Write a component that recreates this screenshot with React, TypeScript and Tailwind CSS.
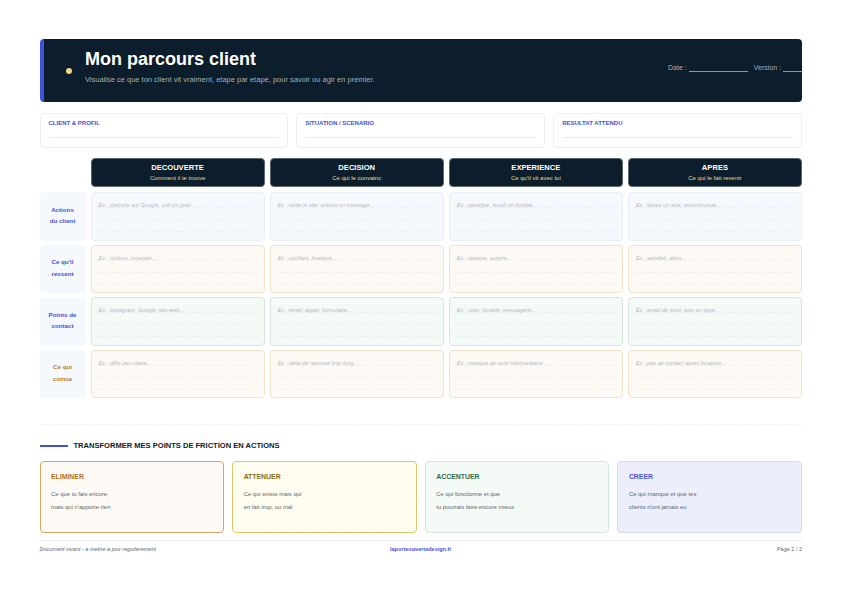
const infoCards = ["CLIENT & PROFIL", "SITUATION / SCENARIO", "RESULTAT ATTENDU"];

const stages = [
  { title: "DECOUVERTE", sub: "Comment il te trouve" },
  { title: "DECISION", sub: "Ce qui le convainc" },
  { title: "EXPERIENCE", sub: "Ce qu'il vit avec toi" },
  { title: "APRES", sub: "Ce qui le fait revenir" },
];

const rows = [
  {
    label: ["Actions", "du client"],
    labelClass: "text-[#3f52dc]",
    cellClass: "border-[#e8eef6] bg-[#f5f9fd]",
    lineClass: "border-[#ebeff4]",
    cells: [
      "Ex : cherche sur Google, voit un post...",
      "Ex : visite le site, envoie un message...",
      "Ex : participe, recoit un livrable...",
      "Ex : laisse un avis, recommande...",
    ],
  },
  {
    label: ["Ce qu'il", "ressent"],
    labelClass: "text-[#3f52dc]",
    cellClass: "border-[#f3e1c8] bg-[#fdf9f4]",
    lineClass: "border-[#f0eeea]",
    cells: [
      "Ex : curieux, incertain...",
      "Ex : confiant, hesitant...",
      "Ex : rassure, surpris...",
      "Ex : satisfait, decu...",
    ],
  },
  {
    label: ["Points de", "contact"],
    labelClass: "text-[#3f52dc]",
    cellClass: "border-[#d5e6da] bg-[#f4faf6]",
    lineClass: "border-[#e9efeb]",
    cells: [
      "Ex : Instagram, Google, site web...",
      "Ex : email, appel, formulaire...",
      "Ex : visio, livrable, messagerie...",
      "Ex : email de suivi, avis en ligne...",
    ],
  },
  {
    label: ["Ce qui", "coince"],
    labelClass: "text-[#b8791f]",
    cellClass: "border-[#f3e1c8] bg-[#fdf9f4]",
    lineClass: "border-[#f0eeea]",
    cells: [
      "Ex : offre peu claire...",
      "Ex : delai de reponse trop long...",
      "Ex : manque de suivi intermediaire...",
      "Ex : pas de contact apres livraison...",
    ],
  },
];

const actions = [
  {
    title: "ELIMINER",
    titleClass: "text-[#b8701a]",
    cardClass: "border-[#d9a566] bg-[#fdfaf6]",
    lines: ["Ce que tu fais encore,", "mais qui n'apporte rien"],
  },
  {
    title: "ATTENUER",
    titleClass: "text-[#8a6a14]",
    cardClass: "border-[#e3c567] bg-[#fffdf0]",
    lines: ["Ce qui existe mais qui", "en fait trop, ou mal"],
  },
  {
    title: "ACCENTUER",
    titleClass: "text-[#2f6b4a]",
    cardClass: "border-[#d5e6da] bg-[#f4faf6]",
    lines: ["Ce qui fonctionne et que", "tu pourrais faire encore mieux"],
  },
  {
    title: "CREER",
    titleClass: "text-[#3f52dc]",
    cardClass: "border-[#d3daf6] bg-[#eceffb]",
    lines: ["Ce qui manque et que tes", "clients n'ont jamais eu"],
  },
];

export default function App() {
  return (
    <div className="h-[595px] w-[841px] overflow-hidden bg-white pt-[39px] pr-[39px] pl-[39.5px] font-['Liberation_Sans',Arial,sans-serif]">
      {/* Header */}
      <div className="flex h-[63px] items-center overflow-hidden rounded-[4px] border-l-[4px] border-[#3f52dc] bg-[#0c1e2b]">
        <div className="ml-[22px] h-[6px] w-[6px] rounded-full bg-[#f3d77c]" />
        <div className="mb-[9px] ml-[13.5px] flex-1">
          <div className="text-[18px] leading-[22px] font-bold text-white">Mon parcours client</div>
          <div className="mt-[5px] text-[7.5px] leading-[10px] text-[#a3aeb8]">
            Visualise ce que ton client vit vraiment, etape par etape, pour savoir ou agir en premier.
          </div>
        </div>
        <div className="mb-[6px] flex items-end text-[7px] leading-[9px] text-[#a3aeb8]">
          <span>Date :</span>
          <span className="ml-[2px] h-[8px] w-[59px] border-b border-[#8b98a3]" />
          <span className="ml-[6px]">Version :</span>
          <span className="ml-[2px] h-[8px] w-[19px] border-b border-[#8b98a3]" />
        </div>
      </div>

      {/* Info */}
      <div className="mt-[10.5px] grid grid-cols-3 gap-[8px]">
        {infoCards.map((label) => (
          <div key={label} className="h-[35px] rounded-[4px] border border-[#eceff3] bg-white px-[8px] pt-[6px]">
            <div className="text-[6px] leading-[7px] font-bold text-[#3f52dc]">{label}</div>
            <div className="mt-[10px] border-b border-[#e9ecef]" />
          </div>
        ))}
      </div>

      {/* Journey grid */}
      <div className="mt-[10.5px] grid grid-cols-[46px_repeat(4,1fr)] gap-x-[5px]">
        <div />
        {stages.map((stage) => (
          <div key={stage.title} className="flex h-[29px] flex-col items-center rounded-[4px] border border-[#5b6770] bg-[#0c1e2b] pt-[4px]">
            <div className="text-[7.6px] leading-[10px] font-bold text-white">{stage.title}</div>
            <div className="mt-[2px] text-[6px] leading-[7px] text-[#e6dc9a]">{stage.sub}</div>
          </div>
        ))}
        {rows.map((row, i) => (
          <div key={row.label[0]} className={`col-span-5 grid grid-cols-subgrid ${i === 0 ? "mt-[5px]" : "mt-[4px]"}`}>
            <div className={`flex h-[48.5px] flex-col items-center justify-center rounded-[4px] bg-[#f5f9fe] pb-[2px] text-[6.2px] leading-[11.5px] font-bold ${row.labelClass}`}>
              <span>{row.label[0]}</span>
              <span>{row.label[1]}</span>
            </div>
            {row.cells.map((cell) => (
              <div key={cell} className={`h-[48.5px] rounded-[4px] border px-[5px] pt-[3px] ${row.cellClass}`}>
                <div className={`h-[12px] border-b border-dashed pl-[2px] text-[5.6px] leading-[18px] text-[#b4b9be] italic ${row.lineClass}`}>{cell}</div>
                <div className={`h-[12px] border-b border-dashed ${row.lineClass}`} />
                <div className={`h-[12px] border-b border-dashed ${row.lineClass}`} />
              </div>
            ))}
          </div>
        ))}
      </div>

      {/* Section divider */}
      <div className="mt-[26px] border-t border-dashed border-[#eff1f3]" />

      {/* Actions */}
      <div className="mt-[15.5px] flex items-center gap-[6px]">
        <div className="h-[2px] w-[28px] bg-[#3f52dc]" />
        <div className="text-[7.55px] leading-[10px] font-bold text-[#0c1e2b]">TRANSFORMER MES POINTS DE FRICTION EN ACTIONS</div>
      </div>
      <div className="mt-[10.5px] grid grid-cols-4 gap-[8px]">
        {actions.map((action) => (
          <div key={action.title} className={`h-[72px] rounded-[4px] border px-[10.5px] pt-[10px] ${action.cardClass}`}>
            <div className={`text-[6.9px] leading-[10px] font-bold ${action.titleClass}`}>{action.title}</div>
            <div className="mt-[6px] text-[5.9px] leading-[13px] text-[#5a6570]">
              {action.lines.map((line) => (
                <div key={line}>{line}</div>
              ))}
            </div>
          </div>
        ))}
      </div>

      {/* Footer */}
      <div className="mt-[6.5px] flex items-center justify-between border-t border-[#eceff3] pt-[4px] text-[5.5px] leading-[8px]">
        <span className="w-[200px] text-[#5a6570] italic">Document vivant - a mettre a jour regulierement</span>
        <span className="font-bold text-[#3f52dc]">laporteouvertedesign.fr</span>
        <span className="w-[200px] text-right text-[#5a6570]">Page 2 / 2</span>
      </div>
    </div>
  );
}
